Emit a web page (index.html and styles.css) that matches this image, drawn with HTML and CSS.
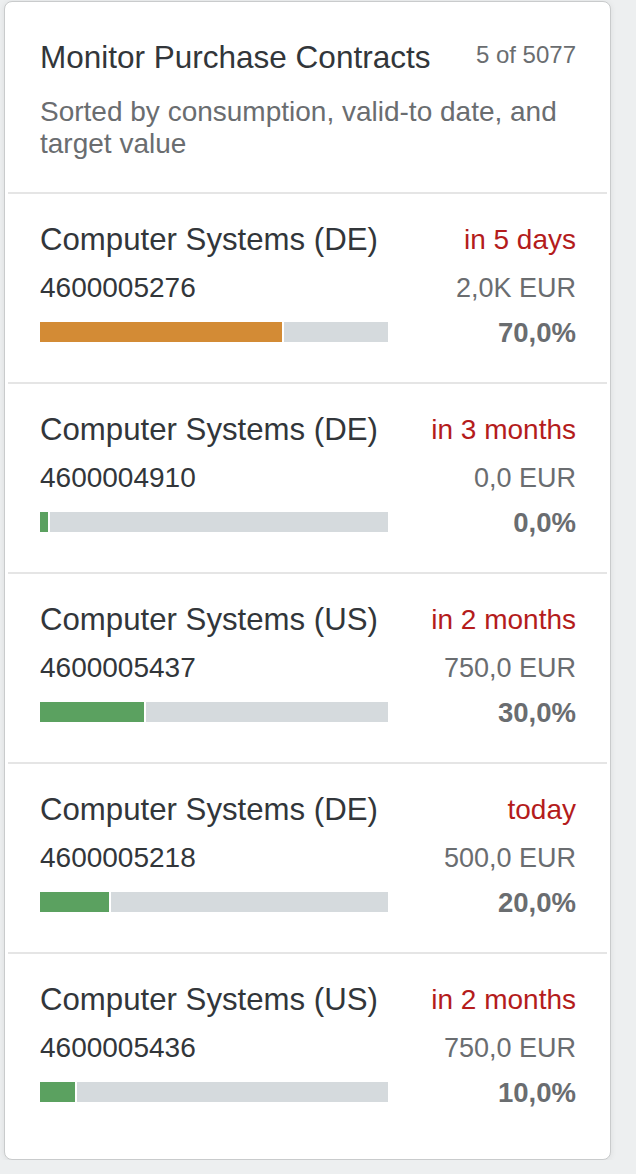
FILE: index.html
```html
<!DOCTYPE html>
<html lang="en">
<head>
<meta charset="utf-8">
<title>Monitor Purchase Contracts</title>
<link rel="stylesheet" href="styles.css">
</head>
<body>
<div class="card">
  <div class="header">
    <div class="header-top">
      <div class="title">Monitor Purchase Contracts</div>
      <div class="counter">5 of 5077</div>
    </div>
    <div class="subtitle">Sorted by consumption, valid-to date, and target value</div>
  </div>

  <div class="item">
    <div class="row row-1"><span class="name">Computer Systems (DE)</span><span class="due">in 5 days</span></div>
    <div class="row row-2"><span class="num">4600005276</span><span class="amount">2,0K EUR</span></div>
    <div class="row row-3">
      <div class="bar"><div class="fill fill-critical" style="width:242px"></div><div class="rest"></div></div>
      <span class="pct">70,0%</span>
    </div>
  </div>

  <div class="item">
    <div class="row row-1"><span class="name">Computer Systems (DE)</span><span class="due">in 3 months</span></div>
    <div class="row row-2"><span class="num">4600004910</span><span class="amount">0,0 EUR</span></div>
    <div class="row row-3">
      <div class="bar"><div class="fill fill-good" style="width:8px"></div><div class="rest"></div></div>
      <span class="pct">0,0%</span>
    </div>
  </div>

  <div class="item">
    <div class="row row-1"><span class="name">Computer Systems (US)</span><span class="due">in 2 months</span></div>
    <div class="row row-2"><span class="num">4600005437</span><span class="amount">750,0 EUR</span></div>
    <div class="row row-3">
      <div class="bar"><div class="fill fill-good" style="width:104px"></div><div class="rest"></div></div>
      <span class="pct">30,0%</span>
    </div>
  </div>

  <div class="item">
    <div class="row row-1"><span class="name">Computer Systems (DE)</span><span class="due">today</span></div>
    <div class="row row-2"><span class="num">4600005218</span><span class="amount">500,0 EUR</span></div>
    <div class="row row-3">
      <div class="bar"><div class="fill fill-good" style="width:69px"></div><div class="rest"></div></div>
      <span class="pct">20,0%</span>
    </div>
  </div>

  <div class="item item-last">
    <div class="row row-1"><span class="name">Computer Systems (US)</span><span class="due">in 2 months</span></div>
    <div class="row row-2"><span class="num">4600005436</span><span class="amount">750,0 EUR</span></div>
    <div class="row row-3">
      <div class="bar"><div class="fill fill-good" style="width:35px"></div><div class="rest"></div></div>
      <span class="pct">10,0%</span>
    </div>
  </div>
</div>
</body>
</html>
```

FILE: styles.css
```css
html, body {
  margin: 0;
  background: #edeff0;
}
body {
  padding: 1px 0 0 4px;
  font-family: "Liberation Sans", Arial, sans-serif;
  color: #32363a;
}
.card {
  box-sizing: border-box;
  width: 607px;
  background: #ffffff;
  border: 1px solid #c9cbcc;
  border-radius: 8px;
  box-shadow: 0 1px 6px rgba(0, 0, 0, 0.08);
  padding: 0 3px 17px 3px;
}
.header {
  padding: 35px 31px 32px 32px;
}
.header-top {
  display: flex;
  justify-content: space-between;
  align-items: flex-start;
}
.title {
  font-size: 31.5px;
  line-height: 40px;
  color: #32363a;
}
.counter {
  font-size: 24px;
  line-height: 36px;
  color: #6a6d70;
}
.subtitle {
  margin-top: 19px;
  font-size: 28px;
  line-height: 32px;
  color: #6a6d70;
}
.item {
  border-top: 2px solid #e5e5e5;
  padding: 26px 31px 31px 32px;
}
.row {
  display: flex;
  justify-content: space-between;
  align-items: center;
}
.row-1 {
  height: 40px;
}
.row-2 {
  height: 36px;
  margin-top: 10px;
}
.row-3 {
  height: 36px;
  margin-top: 9px;
}
.name {
  font-size: 31.2px;
  line-height: 40px;
  color: #32363a;
}
.due {
  font-size: 28px;
  line-height: 40px;
  color: #b41c1c;
}
.num {
  font-size: 28px;
  line-height: 36px;
  color: #32363a;
}
.amount {
  font-size: 27px;
  line-height: 36px;
  color: #6a6d70;
}
.pct {
  font-size: 27.5px;
  line-height: 36px;
  font-weight: bold;
  color: #6a6d70;
}
.bar {
  display: flex;
  width: 348px;
  height: 20px;
  gap: 2px;
  margin-top: -2px;
}
.fill {
  height: 100%;
  flex: none;
}
.fill-critical {
  background: #d38b35;
}
.fill-good {
  background: #5ba160;
}
.rest {
  flex: 1;
  height: 100%;
  background: #d5dadd;
}
```
